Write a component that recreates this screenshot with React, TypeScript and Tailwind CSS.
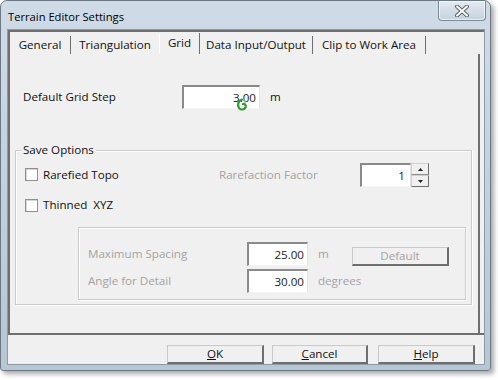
import React from "react";

const font = { fontFamily: '"Open Sans", "Noto Sans", sans-serif' };

function Btn({ children, className = "", disabled = false }: { children: React.ReactNode; className?: string; disabled?: boolean }) {
  return (
    <div
      className={`h-[19px] flex items-center justify-center bg-[#f0f0f0] border-t border-l border-[#c9c9c9] border-r-2 border-b-2 border-r-[#6e6e6e] border-b-[#6e6e6e] text-[11.6px] ${disabled ? "text-[#a3a3a3]" : "text-[#111]"} ${className}`}
    >
      {children}
    </div>
  );
}

function Input({ value, className = "", children }: { value: string; className?: string; children?: React.ReactNode }) {
  return (
    <div
      className={`relative bg-white border-t-2 border-l-2 border-[#8a8a8a] border-r border-b border-r-[#e3e3e3] border-b-[#f4f4f4] flex items-center justify-end pr-[3px] text-[11.6px] text-[#222] ${className}`}
    >
      {value}
      {children}
    </div>
  );
}

function Check() {
  return <div className="w-[13px] h-[13px] bg-white border border-[#8f8f8f] shadow-[inset_1px_1px_0_#d6d6d6]" />;
}

export default function App() {
  return (
    <div className="w-[498px] h-[380px] bg-white" style={font}>
      <div className="w-[491px] h-[371px] rounded-t-[7px] rounded-b-[3px] border border-[#6c7884] bg-gradient-to-b from-[#cfdbe7] via-[#c3d1df] to-[#b8c6d4] shadow-[3px_3px_5px_rgba(0,0,0,0.35)] flex flex-col">
        {/* title bar */}
        <div className="h-[28px] flex items-start">
          <div className="pl-[7px] pt-[7px] text-[11.2px] leading-[18px] text-black">Terrain Editor Settings</div>
          <div className="ml-auto mr-[4px] w-[48px] h-[20px] rounded-b-[4px] border border-t-0 border-[#7d8a98] bg-gradient-to-b from-[#e3eaf2] to-[#c6d2de] shadow-[inset_0_0_0_1px_rgba(255,255,255,0.6)] flex items-center justify-center">
            <svg width="16" height="12" viewBox="0 0 16 12">
              <path d="M3 1.5 L13 10.5 M13 1.5 L3 10.5" stroke="#56626f" strokeWidth="4" strokeLinecap="round" />
              <path d="M3 1.5 L13 10.5 M13 1.5 L3 10.5" stroke="#ffffff" strokeWidth="2" strokeLinecap="round" />
            </svg>
          </div>
        </div>
        {/* client */}
        <div className="ml-[6px] mr-[5px] h-[336px] bg-[#f0f0f0] border border-[#8d99a5] flex flex-col">
          {/* tab panel */}
          <div className="h-[305px] border-t-2 border-l-2 border-[#6f6f6f] border-b-2 flex flex-col">
            <div className="h-[22px] flex items-end text-[11.6px] text-[#111]">
              <div className="w-[61px] h-[18px] border-r border-[#6f6f6f] flex items-center justify-center">General</div>
              <div className="w-[88px] h-[18px] flex items-center justify-center">Triangulation</div>
              <div className="w-[41px] h-[21px] border-r border-[#6f6f6f] border-l border-l-white flex items-start pt-[1px] justify-center">Grid</div>
              <div className="w-[113px] h-[18px] border-r border-[#6f6f6f] flex items-center justify-center">Data Input/Output</div>
              <div className="w-[113px] h-[18px] border-r border-[#6f6f6f] flex items-center justify-center">Clip to Work Area</div>
            </div>
            <div className="flex-1 border-r-2 border-[#6f6f6f] mr-[4px] flex flex-col">
              {/* default grid step */}
              <div className="mt-[31px] pl-[13px] flex items-center h-[24px] text-[11.6px] text-[#111]">
                <div className="w-[159px]">Default Grid Step</div>
                <Input value="3.00" className="w-[78px] h-[24px]">
                  <svg className="absolute left-[52px] top-[11px]" width="12" height="13" viewBox="0 0 12 13">
                    <path d="M6 1.5 C2.5 2.5 1.5 6 2.5 9 C3.5 12 8 12.5 9.5 9.5 C10.5 7.5 9 5.5 7 6" fill="none" stroke="#2c9a2c" strokeWidth="2.2" strokeLinecap="round" />
                    <path d="M7.5 1 L9 4" stroke="#6cc36c" strokeWidth="1.5" strokeLinecap="round" />
                  </svg>
                </Input>
                <div className="ml-[10px]">m</div>
              </div>
              {/* save options */}
              <div className="relative mt-[41px] ml-[5px] w-[457px] h-[155px] border border-[#cbcbcb] shadow-[inset_1px_1px_0_#ffffff,1px_1px_0_#ffffff] flex flex-col text-[11.6px]">
                <span className="absolute -top-[10px] left-[5px] px-[2px] bg-[#f0f0f0] text-[#111] leading-[18px]">Save Options</span>
                <div className="mt-[12px] h-[24px] flex items-center pl-[9px]">
                  <div className="w-[194px] flex items-center gap-[5px] text-[#111]">
                    <Check />
                    <span>Rarefied Topo</span>
                  </div>
                  <div className="w-[141px] text-[#a3a3a3]">Rarefaction Factor</div>
                  <Input value="1" className="w-[51px] h-[24px] pr-[5px]" />
                  <div className="w-[18px] h-[24px] flex flex-col">
                    <div className="h-[12px] border-t border-l border-[#d0d0d0] border-r border-b border-r-[#6e6e6e] border-b-[#8e8e8e] flex items-center justify-center">
                      <svg width="5" height="3" viewBox="0 0 5 3"><path d="M0 3 L2.5 0 L5 3Z" fill="#222" /></svg>
                    </div>
                    <div className="h-[12px] border-t border-l border-[#d0d0d0] border-r border-b border-r-[#6e6e6e] border-b-[#6e6e6e] flex items-center justify-center">
                      <svg width="5" height="3" viewBox="0 0 5 3"><path d="M0 0 L2.5 3 L5 0Z" fill="#222" /></svg>
                    </div>
                  </div>
                </div>
                <div className="mt-[11px] h-[14px] flex items-center pl-[9px] gap-[5px] text-[#111]">
                  <Check />
                  <span>Thinned&nbsp; XYZ</span>
                </div>
                <div className="mt-[15px] ml-[62px] w-[388px] h-[73px] border border-[#cbcbcb] shadow-[inset_1px_1px_0_#ffffff,1px_1px_0_#ffffff] flex flex-col text-[#a3a3a3]">
                  <div className="mt-[14px] h-[24px] flex items-center pl-[9px]">
                    <div className="w-[159px]">Maximum Spacing</div>
                    <Input value="25.00" className="w-[61px] h-[24px]" />
                    <div className="ml-[10px] w-[34px]">m</div>
                    <Btn disabled className="w-[97px] self-end">Default</Btn>
                  </div>
                  <div className="mt-[3px] h-[24px] flex items-center pl-[9px]">
                    <div className="w-[159px]">Angle for Detail</div>
                    <Input value="30.00" className="w-[61px] h-[24px]" />
                    <div className="ml-[10px]">degrees</div>
                  </div>
                </div>
              </div>
            </div>
          </div>
          {/* buttons */}
          <div className="mt-[10px] flex pl-[159px]">
            <Btn className="w-[97px]"><span><span className="underline">O</span>K</span></Btn>
            <Btn className="w-[96px] ml-[8px]"><span><span className="underline">C</span>ancel</span></Btn>
            <Btn className="w-[97px] ml-[10px]"><span><span className="underline">H</span>elp</span></Btn>
          </div>
        </div>
      </div>
    </div>
  );
}
